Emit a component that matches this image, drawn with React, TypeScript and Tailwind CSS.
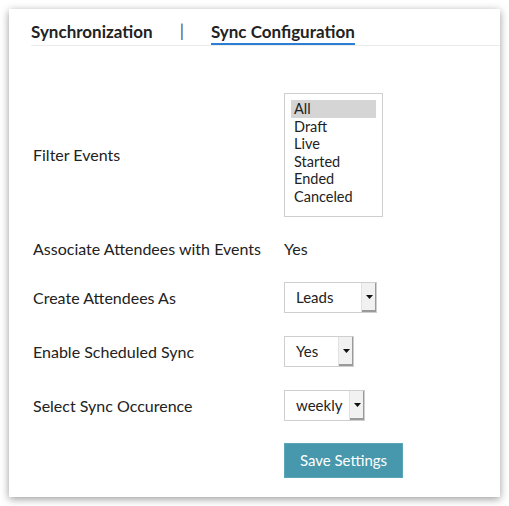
import React from "react";

const font = { fontFamily: "Lato, 'Open Sans', 'Liberation Sans', sans-serif" };

function SelectBox({ value, width }: { value: string; width: string }) {
  return (
    <div
      className={`flex h-[31px] items-stretch border border-[#cfcfcf] bg-white ${width}`}
    >
      <div className="flex flex-1 items-center pl-[11px] text-[15px] text-[#222]">
        {value}
      </div>
      <div className="relative flex w-[15px] items-center justify-center border-l border-[#e2e2e2] bg-[#f1f1f1] shadow-[inset_-1px_-2px_0_#9a9a9a]">
        <svg width="7" height="4" viewBox="0 0 7 4" className="-mt-[2px]">
          <polygon points="0,0 7,0 3.5,4" fill="#111" />
        </svg>
      </div>
    </div>
  );
}

export default function App() {
  const events = ["All", "Draft", "Live", "Started", "Ended", "Canceled"];

  return (
    <div className="min-h-screen bg-white p-[9px]" style={font}>
      <div className="h-[488px] w-[491px] bg-white shadow-[0_2px_8px_rgba(0,0,0,0.4)]">
        {/* tabs */}
        <div className="ml-[22px] flex items-end border-b border-[#ececec] pt-[11px] text-[17px] leading-[22px] font-bold text-[#222]">
          <div className="pb-[2px]">Synchronization</div>
          <div className="ml-[27px] pb-[3px] font-normal text-[#555]">|</div>
          <div className="ml-[27px] border-b-2 border-[#2a7fd4]">
            Sync Configuration
          </div>
        </div>

        {/* form */}
        <div className="ml-[24px] mt-[47px] text-[16px] text-[#222]">
          <div className="flex items-center">
            <div className="w-[251px]">Filter Events</div>
            <div className="h-[124px] w-[99px] border border-[#cfcfcf] px-[6px] pt-[6px] text-[14.5px] leading-[17.5px]">
              {events.map((e, i) => (
                <div
                  key={e}
                  className={`pl-[3px] ${i === 0 ? "bg-[#d5d5d5]" : ""}`}
                >
                  {e}
                </div>
              ))}
            </div>
          </div>

          <div className="mt-[16px] flex h-[31px] items-center">
            <div className="w-[251px]">Associate Attendees with Events</div>
            <div>Yes</div>
          </div>

          <div className="mt-[18px] flex items-center">
            <div className="w-[251px]">Create Attendees As</div>
            <SelectBox value="Leads" width="w-[93px]" />
          </div>

          <div className="mt-[23px] flex items-center">
            <div className="w-[251px]">Enable Scheduled Sync</div>
            <SelectBox value="Yes" width="w-[70px]" />
          </div>

          <div className="mt-[23px] flex items-center">
            <div className="w-[251px]">Select Sync Occurence</div>
            <SelectBox value="weekly" width="w-[81px]" />
          </div>

          <div className="mt-[22px] flex">
            <div className="w-[251px]" />
            <button className="h-[35px] w-[119px] border border-[#5aa6b8] bg-[#4798ad] text-[15px] text-white">
              Save Settings
            </button>
          </div>
        </div>
      </div>
    </div>
  );
}
